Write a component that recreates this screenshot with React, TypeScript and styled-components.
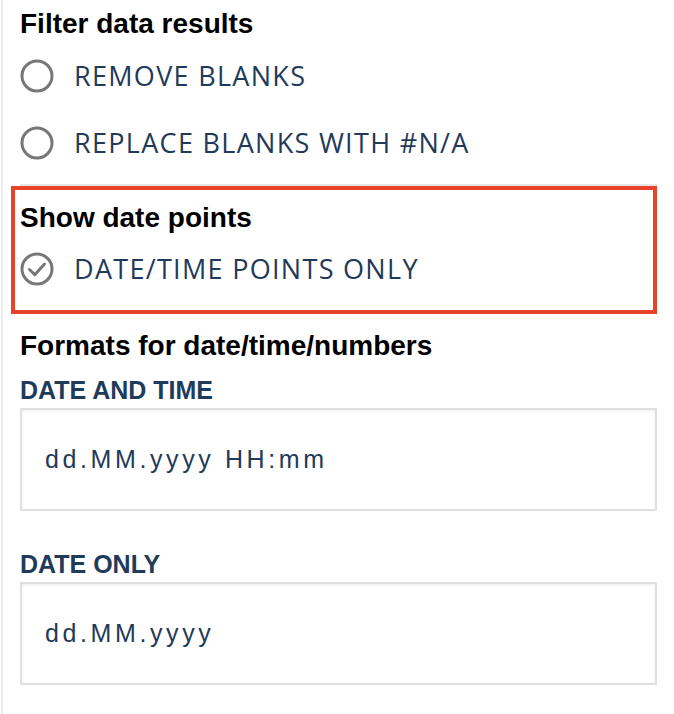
import React from "react";
import styled, { createGlobalStyle } from "styled-components";

const GlobalStyle = createGlobalStyle`
  html, body { margin: 0; padding: 0; background: #ffffff; }
  body { font-family: "Liberation Sans", Arial, sans-serif; }
`;

const Page = styled.div`
  margin-left: 1px;
  border-left: 2px solid #ececec;
  min-height: 714px;
  box-sizing: border-box;
  padding: 8px 17px 0 17px;
  display: flex;
  flex-direction: column;
`;

const Heading = styled.h2<{ $mt?: number }>`
  margin: ${(p) => p.$mt ?? 0}px 0 0 0;
  font-family: "Liberation Sans", Arial, sans-serif;
  font-weight: 700;
  font-size: 28px;
  line-height: 32px;
  color: #000000;
`;

const OptionList = styled.div<{ $mt: number; $gap: number }>`
  display: flex;
  flex-direction: column;
  gap: ${(p) => p.$gap}px;
  margin-top: ${(p) => p.$mt}px;
`;

const OptionRow = styled.label`
  display: flex;
  align-items: center;
  gap: 20px;
  height: 34px;
  cursor: pointer;
`;

const RadioIcon = styled.svg`
  width: 34px;
  height: 34px;
  flex: none;
`;

const OptionText = styled.span`
  font-family: "Open Sans", sans-serif;
  font-weight: 400;
  font-size: 27px;
  letter-spacing: 1.3px;
  color: #1f3a5a;
  text-transform: uppercase;
  line-height: 34px;
`;

const Divider = styled.div`
  height: 2px;
  background: #e6e6e6;
  margin-top: 24px;
`;

const Highlight = styled.section`
  margin: 0 0 0 -9px;
  border: 4px solid #ea4228;
  padding: 12px 0 24px 5px;
  display: flex;
  flex-direction: column;
`;

const FieldLabel = styled.div<{ $mt: number }>`
  margin-top: ${(p) => p.$mt}px;
  font-family: "Liberation Sans", Arial, sans-serif;
  font-weight: 700;
  font-size: 25px;
  line-height: 28px;
  color: #1f3b5b;
  text-transform: uppercase;
`;

const FormatInput = styled.input`
  display: block;
  box-sizing: border-box;
  margin-top: 4px;
  width: 100%;
  height: 103px;
  border: 2px solid #e0e0e0;
  box-shadow: inset 0 1px 3px rgba(0, 0, 0, 0.08);
  padding: 0 0 0 23px;
  font-family: "Liberation Sans", Arial, sans-serif;
  font-size: 25px;
  letter-spacing: 3.6px;
  color: #1f3a5a;
  background: #ffffff;
  outline: none;
`;

const Radio: React.FC<{ checked?: boolean }> = ({ checked }) => (
  <RadioIcon viewBox="0 0 34 34">
    <circle cx="17" cy="17" r="15" fill="none" stroke="#777777" strokeWidth="3" />
    {checked && (
      <path
        d="M9.5 17.5 L14.8 22.8 L24.5 12"
        fill="none"
        stroke="#777777"
        strokeWidth="3"
        strokeLinecap="round"
        strokeLinejoin="round"
      />
    )}
  </RadioIcon>
);

const Option: React.FC<{ label: string; checked?: boolean }> = ({ label, checked }) => (
  <OptionRow>
    <Radio checked={checked} />
    <OptionText>{label}</OptionText>
  </OptionRow>
);

export default function App() {
  return (
    <>
      <GlobalStyle />
      <Page>
        <Heading>Filter data results</Heading>
        <OptionList $mt={19} $gap={33}>
          <Option label="Remove blanks" />
          <Option label="Replace blanks with #N/A" />
        </OptionList>
        <Divider />
        <Highlight>
          <Heading>Show date points</Heading>
          <OptionList $mt={18} $gap={0}>
            <Option label="Date/time points only" checked />
          </OptionList>
        </Highlight>
        <Heading $mt={16}>Formats for date/time/numbers</Heading>
        <FieldLabel $mt={14}>Date and time</FieldLabel>
        <FormatInput readOnly defaultValue="dd.MM.yyyy HH:mm" />
        <FieldLabel $mt={39}>Date only</FieldLabel>
        <FormatInput readOnly defaultValue="dd.MM.yyyy" />
      </Page>
    </>
  );
}
